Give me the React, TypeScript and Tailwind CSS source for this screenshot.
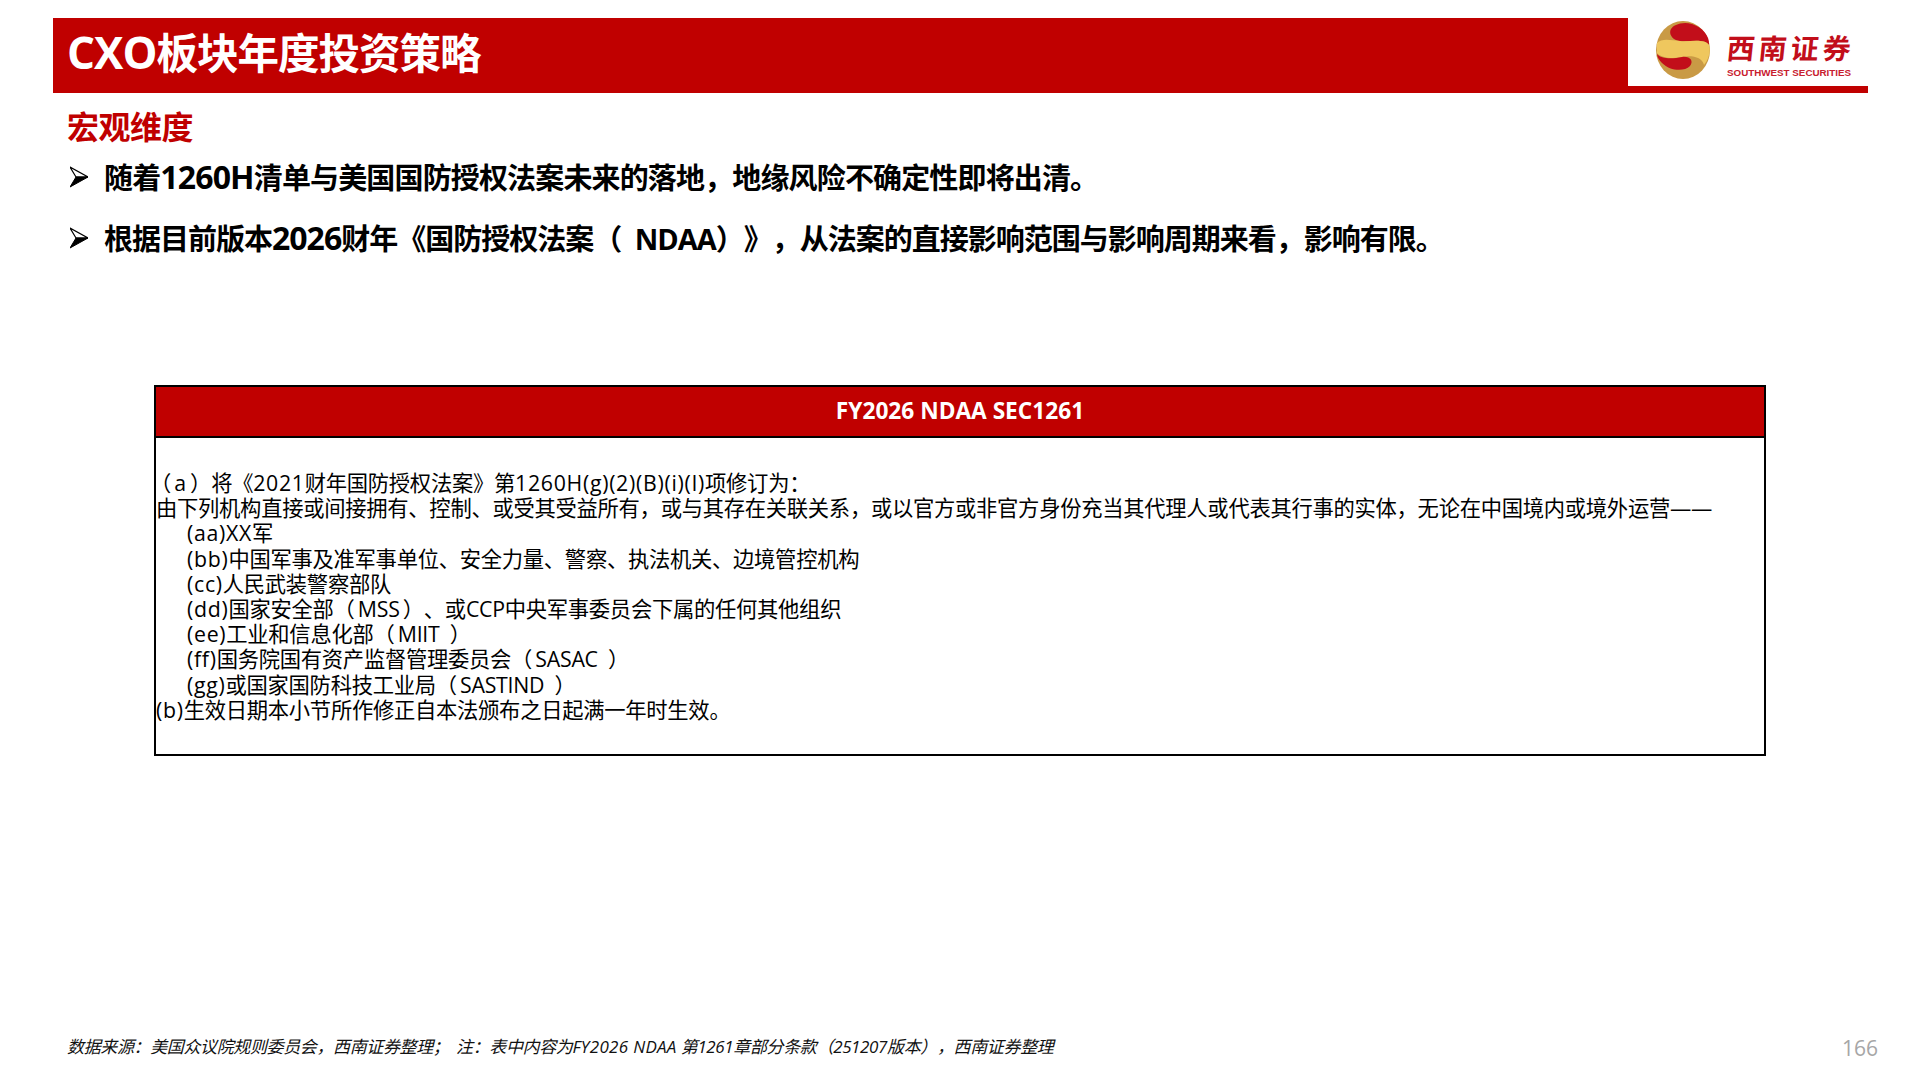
import React from 'react';

const cjk = '"Open Sans", "Noto Sans CJK SC", sans-serif';

const bodyLines = [
    { text: '（\u2009a\u2009）将《2021财年国防授权法案》第1260H(g)(2)(B)(i)(I)项修订为：', indent: false, first: true },
    { text: '由下列机构直接或间接拥有、控制、或受其受益所有，或与其存在关联关系，或以官方或非官方身份充当其代理人或代表其行事的实体，无论在中国境内或境外运营——', indent: false },
    { text: '(aa)XX军', indent: true },
    { text: '(bb)中国军事及准军事单位、安全力量、警察、执法机关、边境管控机构', indent: true },
    { text: '(cc)人民武装警察部队', indent: true },
    { text: '(dd)国家安全部（\u2009MSS\u2009）、或CCP中央军事委员会下属的任何其他组织', indent: true },
    { text: '(ee)工业和信息化部（\u2009MIIT\u2002）', indent: true },
    { text: '(ff)国务院国有资产监督管理委员会（\u2009SASAC\u2002）', indent: true },
    { text: '(gg)或国家国防科技工业局（\u2009SASTIND\u2002）', indent: true },
    { text: '(b)生效日期本小节所作修正自本法颁布之日起满一年时生效。', indent: false },
];

// digits and lowercase latin run wider than the CJK around them
function BodyText({ text }: { text: string }) {
    const parts = text.split(/([0-9()a-zA-Z]*[0-9()a-z][0-9()a-zA-Z]*)/);
    return (
        <>
            {parts.map((part, i) =>
                i % 2 === 1 ? <span key={i} className="tracking-[0.7px]">{part}</span> : <span key={i}>{part}</span>
            )}
        </>
    );
}

function Arrow() {
    return (
        <svg width="18" height="22" viewBox="0 0 18 22" className="shrink-0">
            <path d="M0 1 L18 11 L6 11 Z" fill="#fff" stroke="#000" strokeWidth="1.2" strokeLinejoin="miter" />
            <path d="M6 11 L18 11 L0 21 Z" fill="#000" stroke="#000" strokeWidth="1" />
        </svg>
    );
}

function Logo() {
    return (
        <div className="w-[240px] h-[68px] flex items-center pl-[28px] gap-[17px] shrink-0">
            <svg width="54" height="58" viewBox="0 0 54 58" className="shrink-0 mb-[5px]">
                <ellipse cx="27" cy="29" rx="27" ry="29" fill="#c99a45" />
                <path d="M20 4 C10 8 14 19 24 20 C34 21 48 17 53 24 C54 15 46 6 36 3 C30 1 24 2 20 4 Z" fill="#c20e1a" />
                <path d="M1 22 C6 17 14 19 24 20 C34 21 48 17 53 24 C55 30 53 38 48 44 C46 36 36 34 26 36 C16 38 5 37 1 32 Z" fill="#efc75e" />
                <path d="M1 33 C5 38 16 38 26 36 C34 35 38 40 34 45 C28 51 14 50 6 42 C3 39 1 36 1 33 Z" fill="#c20e1a" />
            </svg>
            <div className="flex flex-col items-start mt-[7px]">
                <span className="text-[#c20e1a] text-[28px] leading-[30px] font-bold tracking-[4px] -skew-x-6" style={{ fontFamily: '"Noto Sans CJK SC", sans-serif' }}>西南证券</span>
                <span className="text-[#c8202f] text-[9.8px] leading-[12px] font-bold mt-[5px] whitespace-nowrap" style={{ fontFamily: '"Liberation Sans", sans-serif' }}>SOUTHWEST SECURITIES</span>
            </div>
        </div>
    );
}

export default function App() {
    return (
        <div className="w-[1920px] h-[1080px] bg-white flex flex-col overflow-hidden [text-spacing-trim:space-all]" style={{ fontFamily: cjk }}>
            <div className="flex items-end ml-[53px] mr-[52px] mt-[18px] border-b-[7px] border-[#c00000]">
                <div className="flex-1 h-[68px] bg-[#c00000] flex items-center pl-[14px]">
                    <h1 className="text-white text-[41.5px] font-bold leading-none tracking-[-1px]"><span className="text-[44px]">CXO</span>板块年度投资策略</h1>
                </div>
                <Logo />
            </div>

            <div className="pl-[67px] mt-[15px]">
                <h2 className="text-[#c00000] text-[32px] leading-[38px] font-bold tracking-[-0.5px]">宏观维度</h2>
            </div>

            <div className="flex flex-col pl-[70px] mt-[12px] gap-[23px]">
                <div className="flex items-center gap-[16px] h-[38px]">
                    <Arrow />
                    <span className="text-[29px] leading-[38px] font-bold text-black tracking-[-0.85px] whitespace-nowrap">随着<span className="text-[32px]">1260H</span>清单与美国国防授权法案未来的落地，地缘风险不确定性即将出清。</span>
                </div>
                <div className="flex items-center gap-[16px] h-[38px]">
                    <Arrow />
                    <span className="text-[29px] leading-[38px] font-bold text-black tracking-[-1px] whitespace-nowrap">根据目前版本<span className="text-[32px]">2026</span>财年《国防授权法案（{'\u2002'}NDAA）》，从法案的直接影响范围与影响周期来看，影响有限。</span>
                </div>
            </div>

            <div className="mx-[154px] mt-[128px] h-[371px] border-2 border-black flex flex-col">
                <div className="h-[51px] bg-[#c00000] border-b-2 border-black flex items-center justify-center">
                    <span className="text-white text-[22.7px] font-bold">FY2026 NDAA SEC1261</span>
                </div>
                <div className="pt-[32px] flex flex-col text-black text-[21.3px] leading-[25.2px] tracking-[-0.27px]">
                    {bodyLines.map((line) => (
                        <div key={line.text} className={line.indent ? 'pl-[31px] whitespace-nowrap' : line.first ? '-ml-[6px] whitespace-nowrap' : 'whitespace-nowrap'}>
                            <BodyText text={line.text} />
                        </div>
                    ))}
                </div>
            </div>

            <div className="flex-1 flex items-end justify-between pl-[67px] pr-[42px] pb-[21px]">
                <span className="italic text-[17px] text-[#111] tracking-[-0.37px] leading-[24px]">数据来源：美国众议院规则委员会，西南证券整理；&nbsp;{'\u2009'}注：表中内容为<span className="tracking-[0.3px]">FY2026 NDAA</span> 第1261章部分条款（251207版本），西南证券整理</span>
                <span className="text-[21px] text-[#a6a6a6] leading-[24px] translate-y-[1px]">166</span>
            </div>
        </div>
    );
}
